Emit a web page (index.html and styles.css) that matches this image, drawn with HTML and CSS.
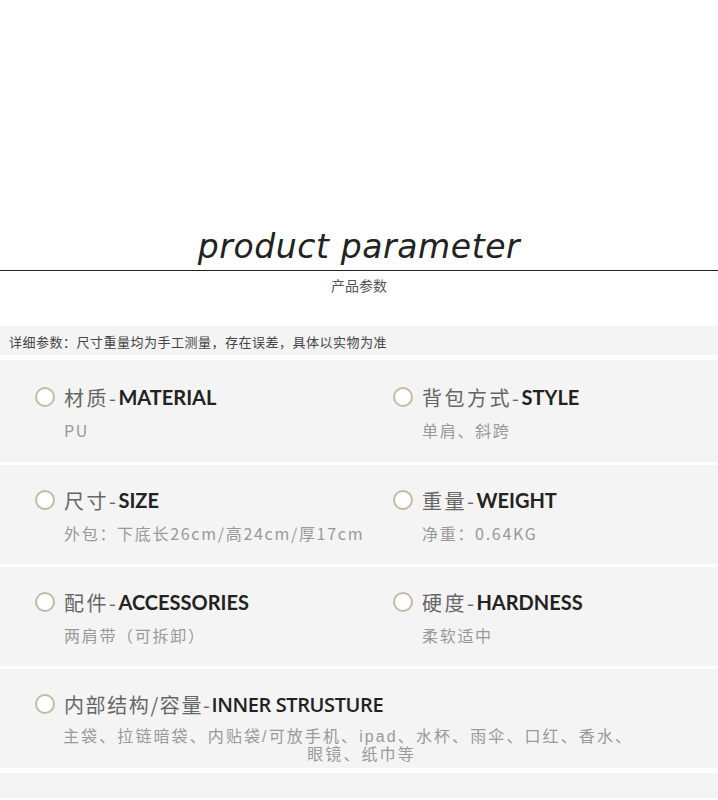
FILE: index.html
```html
<!DOCTYPE html>
<html lang="zh">
<head>
<meta charset="utf-8">
<title>product parameter</title>
<link rel="stylesheet" href="styles.css">
</head>
<body>
<div class="page">
  <header class="head">
    <h1 class="title">product parameter</h1>
    <div class="subtitle">产品参数</div>
  </header>

  <div class="note">详细参数：尺寸重量均为手工测量，存在误差，具体以实物为准</div>

  <section class="band band-first">
    <div class="item">
      <div class="label"><span class="dot"></span><span class="cn">材质-</span><span class="en">MATERIAL</span></div>
      <div class="val val-pu">PU</div>
    </div>
    <div class="item">
      <div class="label"><span class="dot"></span><span class="cn">背包方式-</span><span class="en">STYLE</span></div>
      <div class="val">单肩、斜跨</div>
    </div>
  </section>

  <section class="band">
    <div class="item">
      <div class="label"><span class="dot"></span><span class="cn">尺寸-</span><span class="en">SIZE</span></div>
      <div class="val">外包：下底长26cm/高24cm/厚17cm</div>
    </div>
    <div class="item">
      <div class="label"><span class="dot"></span><span class="cn">重量-</span><span class="en">WEIGHT</span></div>
      <div class="val">净重：0.64KG</div>
    </div>
  </section>

  <section class="band">
    <div class="item">
      <div class="label"><span class="dot"></span><span class="cn">配件-</span><span class="en">ACCESSORIES</span></div>
      <div class="val">两肩带（可拆卸）</div>
    </div>
    <div class="item">
      <div class="label"><span class="dot"></span><span class="cn">硬度-</span><span class="en">HARDNESS</span></div>
      <div class="val">柔软适中</div>
    </div>
  </section>

  <section class="band band-wide">
    <div class="item item-wide">
      <div class="label"><span class="dot"></span><span class="cn cn-tight">内部结构/容量-</span><span class="en en-narrow">INNER STRUSTURE</span></div>
      <div class="desc">
        <div class="desc-line1">主袋、拉链暗袋、内贴袋/可放手机、ipad、水杯、雨伞、口红、香水、</div>
        <div class="desc-line2">眼镜、纸巾等</div>
      </div>
    </div>
  </section>

  <div class="band-tail"></div>
</div>
</body>
</html>
```

FILE: styles.css
```css
* { box-sizing: border-box; }

html, body {
  margin: 0;
  padding: 0;
  background: #ffffff;
}

body {
  font-family: "Noto Sans CJK SC", "Noto Sans", sans-serif;
  color: #666;
}

.page {
  width: 718px;
  display: flex;
  flex-direction: column;
}

.head {
  padding-top: 224px;
  display: flex;
  flex-direction: column;
  align-items: center;
}

.title {
  margin: 0;
  width: 100%;
  text-align: center;
  font-family: "DejaVu Sans", sans-serif;
  font-style: italic;
  font-weight: 300;
  font-size: 33px;
  line-height: 46px;
  color: #222;
  letter-spacing: 0.6px;
  border-bottom: 1.5px solid #222;
}

.subtitle {
  margin-top: 4px;
  font-size: 14px;
  line-height: 20px;
  color: #555;
}

.note {
  margin-top: 31px;
  height: 29px;
  background: #f4f4f4;
  padding: 2px 0 0 9px;
  font-size: 13px;
  line-height: 27px;
  color: #444;
  letter-spacing: 0.5px;
}

.band {
  margin-top: 5px;
  height: 99px;
  background: #f4f4f4;
  display: grid;
  grid-template-columns: 358px 1fr;
  padding: 24px 0 0 35px;
}

.band + .band { margin-top: 3px; }

.band-first {
  height: 102px;
  padding-top: 26px;
}

.band-wide {
  grid-template-columns: 1fr;
}

.band-tail {
  margin-top: 5px;
  height: 25px;
  background: #f4f4f4;
}

.label {
  display: flex;
  align-items: center;
  height: 22px;
  white-space: nowrap;
}

.dot {
  width: 20px;
  height: 20px;
  border-radius: 50%;
  border: 2px solid #c2bca4;
  background: #fff;
  margin-right: 9px;
  flex: none;
}

.cn {
  font-size: 20px;
  color: #666;
  letter-spacing: 2.5px;
}

.cn-tight {
  letter-spacing: 1.6px;
}

.en {
  font-family: "Lato", "Open Sans", sans-serif;
  font-weight: 700;
  font-size: 20px;
  color: #222;
  letter-spacing: 0;
}

.en-narrow {
  font-family: "Open Sans", sans-serif;
  font-weight: 600;
  letter-spacing: -0.4px;
}

.val {
  margin-top: 11px;
  padding-left: 29px;
  font-size: 16px;
  line-height: 22px;
  color: #999;
  letter-spacing: 1.7px;
}

.desc {
  margin-top: 13px;
  padding-left: 28px;
  width: 625px;
  font-family: "Liberation Sans", "Noto Sans CJK SC", sans-serif;
  font-size: 16px;
  color: #999;
  letter-spacing: 2.1px;
}

.desc-line1 {
  white-space: nowrap;
  line-height: 18px;
  height: 18px;
}

.desc-line2 {
  text-align: center;
  line-height: 18px;
  height: 18px;
}
```
